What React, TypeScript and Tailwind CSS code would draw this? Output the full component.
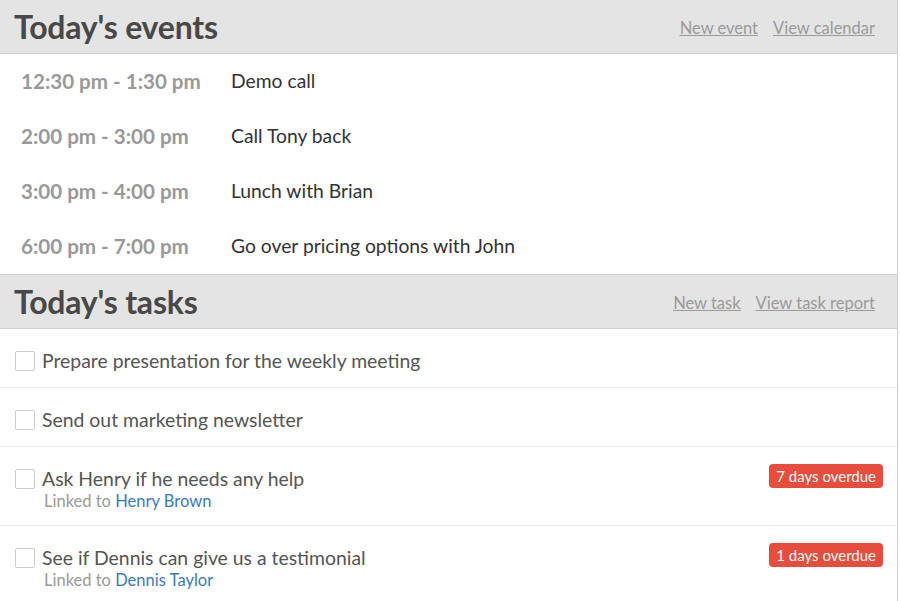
import React from "react";

type EventItem = { time: string; title: string };
type TaskItem = { title: string; linked?: string; overdue?: string };

const events: EventItem[] = [
  { time: "12:30 pm - 1:30 pm", title: "Demo call" },
  { time: "2:00 pm - 3:00 pm", title: "Call Tony back" },
  { time: "3:00 pm - 4:00 pm", title: "Lunch with Brian" },
  { time: "6:00 pm - 7:00 pm", title: "Go over pricing options with John" },
];

const tasks: TaskItem[] = [
  { title: "Prepare presentation for the weekly meeting" },
  { title: "Send out marketing newsletter" },
  { title: "Ask Henry if he needs any help", linked: "Henry Brown", overdue: "7 days overdue" },
  { title: "See if Dennis can give us a testimonial", linked: "Dennis Taylor", overdue: "1 days overdue" },
];

const SectionHeader: React.FC<{ title: string; links: string[]; top?: boolean }> = ({ title, links, top }) => (
  <div
    className={`flex items-center justify-between h-[54px] bg-[#e4e4e4] border-b border-[#cfcfcf] pl-[14px] pr-[22px] ${
      top ? "border-t h-[55px]" : ""
    }`}
  >
    <h2 className="text-[32px] font-bold text-[#484848] leading-none tracking-[-0.2px]">{title}</h2>
    <div className="flex gap-[15px] pt-[3px] text-[16.5px] text-[#9a9a9a] underline">
      {links.map((l) => (
        <a key={l} href="#" className="text-[#9a9a9a]">
          {l}
        </a>
      ))}
    </div>
  </div>
);

export default function App() {
  return (
    <div className="w-[898px] bg-white border-r border-[#cfcfcf] font-['Lato','Noto_Sans',sans-serif] min-h-[601px]">
      {/* Events */}
      <SectionHeader title="Today's events" links={["New event", "View calendar"]} />
      <div>
        {events.map((e) => (
          <div key={e.time} className="flex items-center h-[55px] pl-[21px]">
            <div className="w-[210px] text-[20.6px] font-bold text-[#999999]">{e.time}</div>
            <div className="text-[19.3px] text-[#333333]">{e.title}</div>
          </div>
        ))}
      </div>

      {/* Tasks */}
      <SectionHeader title="Today's tasks" links={["New task", "View task report"]} top />
      <div>
        {tasks.map((t, i) => (
          <div
            key={t.title}
            className={`flex items-start justify-between pl-[15px] pr-[14px] pt-[20px] pb-[14px] ${
              i < tasks.length - 1 ? "border-b border-[#ebebeb]" : ""
            }`}
          >
            <div className="flex items-start gap-[7px]">
              <span className="mt-[2px] w-[20px] h-[20px] border border-[#cccccc] rounded-[2px] bg-white shrink-0" />
              <div>
                <div className="text-[19.4px] leading-[24px] text-[#555555]">{t.title}</div>
                {t.linked && (
                  <div className="text-[16.5px] leading-[20px] text-[#9a9a9a] pl-[2px]">
                    Linked to <a href="#" className="text-[#3b7bb8]">{t.linked}</a>
                  </div>
                )}
              </div>
            </div>
            {t.overdue && (
              <span className="-mt-[3px] bg-[#e74c3c] text-white text-[15px] leading-[24px] px-[7px] rounded-[4px]">
                {t.overdue}
              </span>
            )}
          </div>
        ))}
      </div>
    </div>
  );
}
